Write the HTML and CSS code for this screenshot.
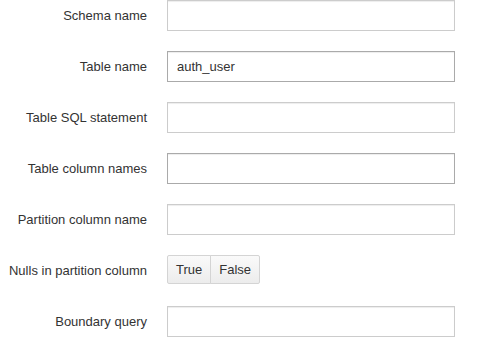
FILE: index.html
```html
<!DOCTYPE html>
<html lang="en">
<head>
	<meta charset="utf-8">
	<title>Table settings</title>
	<link rel="stylesheet" href="styles.css">
</head>
<body>
	<form class="settings">
		<label class="field-label" for="schema">Schema name</label>
		<input class="field" id="schema" type="text">

		<label class="field-label" for="table">Table name</label>
		<input class="field field-dark" id="table" type="text" value="auth_user">

		<label class="field-label" for="sql">Table SQL statement</label>
		<input class="field" id="sql" type="text">

		<label class="field-label" for="columns">Table column names</label>
		<input class="field field-dark" id="columns" type="text">

		<label class="field-label" for="partition">Partition column name</label>
		<input class="field" id="partition" type="text">

		<span class="field-label">Nulls in partition column</span>
		<div class="btn-group">
			<button type="button" class="btn">True</button>
			<button type="button" class="btn">False</button>
		</div>

		<label class="field-label" for="boundary">Boundary query</label>
		<input class="field" id="boundary" type="text">
	</form>
</body>
</html>
```

FILE: styles.css
```css
body {
	margin: 0;
	background-color: #fff;
	color: #333;
	font-family: "Liberation Sans", Arial, sans-serif;
	font-size: 13px;
}
.settings {
	display: grid;
	grid-template-columns: 147px 288px;
	grid-auto-rows: 31px;
	column-gap: 20px;
	row-gap: 20px;
}
.field-label {
	align-self: center;
	text-align: right;
	white-space: nowrap;
}
.field {
	box-sizing: border-box;
	width: 100%;
	height: 31px;
	margin: 0;
	padding: 0 9px;
	border: 1px solid #ccc;
	border-radius: 0;
	box-shadow: inset 0 1px 1px rgba(0, 0, 0, 0.075);
	font: inherit;
	color: #333;
	outline: none;
}
.field-dark {
	border-color: #aaa;
}
.btn-group {
	display: flex;
	align-self: start;
}
.btn {
	height: 29px;
	margin: 0;
	padding: 0 8px;
	border: 1px solid #d4d4d4;
	background: linear-gradient(#fafafa, #ececec);
	color: #333;
	font: inherit;
	border-radius: 0;
}
.btn:first-child {
	border-radius: 2px 0 0 2px;
}
.btn + .btn {
	border-left: 0;
	border-left: 1px solid #d4d4d4;
	margin-left: -1px;
	border-radius: 0 2px 2px 0;
}
```
